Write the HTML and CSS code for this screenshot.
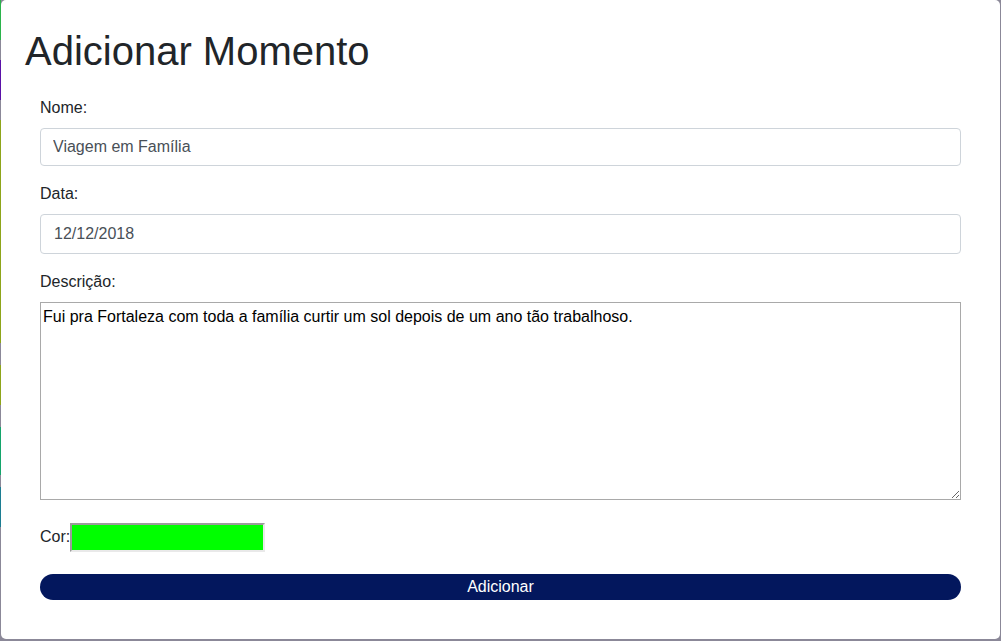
FILE: index.html
```html
<!DOCTYPE html>
<html lang="pt-BR">
<head>
<meta charset="utf-8">
<title>Adicionar Momento</title>
<link rel="stylesheet" href="styles.css">
</head>
<body>
<div class="modal">
  <h1 class="title">Adicionar Momento</h1>
  <form class="form">
    <div class="group">
      <label class="label" for="nome">Nome:</label>
      <input class="control" id="nome" type="text" value="Viagem em Família">
    </div>
    <div class="group">
      <label class="label" for="data">Data:</label>
      <input class="control control-date" id="data" type="text" value="12/12/2018">
    </div>
    <div class="group">
      <label class="label" for="desc">Descrição:</label>
      <textarea class="textarea" id="desc">Fui pra Fortaleza com toda a família curtir um sol depois de um ano tão trabalhoso.</textarea>
    </div>
    <div class="group color-row">
      <label class="color-label" for="cor">Cor:</label>
      <input class="color" id="cor" type="color" value="#00ff00">
    </div>
    <button class="submit" type="button">Adicionar</button>
  </form>
</div>
</body>
</html>
```
FILE: styles.css
```css
html {
  height: 100%;
}
body {
  margin: 0;
  height: 100%;
  font-family: "Liberation Sans", Arial, sans-serif;
  color: #212529;
  background:
    linear-gradient(to bottom,
      #2bb34b 0, #2bb34b 40px,
      #8b8898 40px, #8b8898 60px,
      #5a12a8 60px, #5a12a8 100px,
      #8b8898 100px, #8b8898 120px,
      #8ea51a 120px, #8ea51a 343px,
      #8b8898 343px, #8b8898 365px,
      #8ea51a 365px, #8ea51a 405px,
      #8b8898 405px, #8b8898 427px,
      #14a56b 427px, #14a56b 475px,
      #8b8898 475px, #8b8898 487px,
      #1c7d92 487px, #1c7d92 527px,
      #8b8898 527px) 0 0 / 1px 641px no-repeat,
    #8b8898;
  overflow: hidden;
}
.modal {
  box-sizing: border-box;
  margin-left: 1px;
  width: 999px;
  height: 639px;
  background: #fff;
  border-radius: 5px;
  padding: 27px 24px 0 24px;
}
.title {
  margin: 0 0 21px 0;
  font-size: 40px;
  font-weight: 500;
  line-height: 48px;
  color: #212529;
}
.form {
  margin: 0 15px;
}
.group {
  margin-bottom: 16px;
}
.label {
  display: block;
  font-size: 16px;
  line-height: 24px;
  margin-bottom: 8px;
}
.control {
  display: block;
  box-sizing: border-box;
  width: 100%;
  height: 38px;
  padding: 6px 12px;
  font-family: inherit;
  font-size: 16px;
  line-height: 24px;
  color: #495057;
  background: #fff;
  border: 1px solid #ced4da;
  border-radius: 4px;
  outline: none;
}
.control-date {
  height: 40px;
  padding-left: 13px;
}
.textarea {
  display: block;
  box-sizing: border-box;
  width: 100%;
  height: 198px;
  margin: 0;
  padding: 2px;
  font-family: inherit;
  font-size: 16px;
  line-height: 24px;
  color: #000;
  border: 1px solid #a9a9a9;
  border-radius: 0;
  outline: none;
  resize: vertical;
}
.color-row {
  display: flex;
  align-items: center;
  height: 42px;
}
.color-label {
  font-size: 16px;
  line-height: 24px;
}
.color {
  -webkit-appearance: none;
  appearance: none;
  box-sizing: border-box;
  width: 195px;
  height: 29px;
  margin: 0;
  padding: 0;
  border-style: solid;
  border-width: 2px;
  border-color: #9b9b9b #e9e9e9 #e9e9e9 #9b9b9b;
  background: #00ff00;
  cursor: pointer;
}
.color::-webkit-color-swatch-wrapper {
  padding: 0;
}
.color::-webkit-color-swatch {
  border: none;
}
.submit {
  display: block;
  box-sizing: border-box;
  width: 100%;
  height: 26px;
  padding: 0;
  border: none;
  border-radius: 13px;
  background: #03175d;
  color: #fff;
  font-family: inherit;
  font-size: 16px;
  line-height: 26px;
  text-align: center;
}
```
